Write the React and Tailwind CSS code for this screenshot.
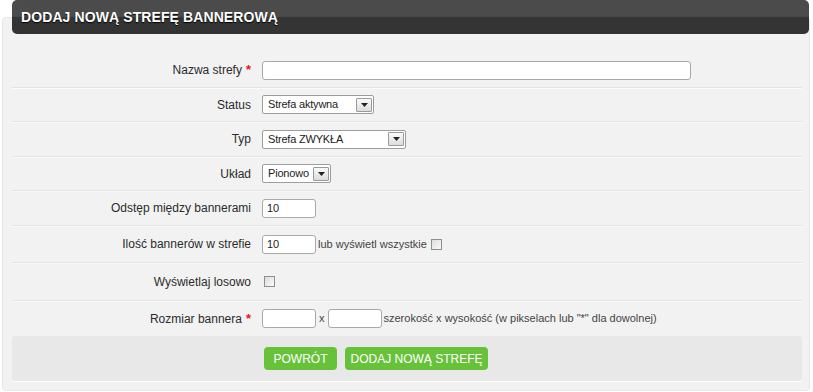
import React from "react";

const FONT = "font-['Liberation_Sans','Arial',sans-serif]";

function Label({ children, req }) {
  return (
    <div className="w-[240px] shrink-0 pr-[1px] text-right text-[12px] text-[#2b2b2b]">
      {children}
      {req && <span className="ml-[4px] text-[13px] font-bold text-[#e3161b]">*</span>}
    </div>
  );
}

function Row({ h, label, req, last, children }) {
  return (
    <div
      className={`flex items-center gap-[10px] ${h} ${
        last ? "" : "border-b border-[#e3e3e3] shadow-[0_1px_0_#fafafa]"
      }`}
    >
      <Label req={req}>{label}</Label>
      <div className="flex items-center">{children}</div>
    </div>
  );
}

function Select({ w, value }) {
  return (
    <div
      className={`flex h-[19px] items-center justify-between rounded-[2px] border border-[#9d9d9d] bg-white pl-[5px] pr-[1px] text-[11px] tracking-[-0.2px] text-[#222] ${w}`}
    >
      <span>{value}</span>
      <div className="flex h-[14px] w-[16px] shrink-0 items-center justify-center rounded-[1px] border border-[#9a9a9a] bg-[linear-gradient(#fafafa,#dcdcdc)]">
        <svg width="7" height="4" viewBox="0 0 7 4">
          <path d="M0 0h7L3.5 4z" fill="#222" />
        </svg>
      </div>
    </div>
  );
}

function Input({ w, value }) {
  return (
    <div
      className={`flex h-[19px] items-center rounded-[3px] border border-[#a9a9a9] bg-white pl-[4px] text-[11px] text-[#222] ${w}`}
    >
      {value}
    </div>
  );
}

function Check() {
  return (
    <div className="h-[11px] w-[11px] border border-[#8e8e8e] bg-[linear-gradient(135deg,#dcdcdc,#fbfbfb)]" />
  );
}

export default function App() {
  return (
    <div className={`h-[392px] w-[813px] overflow-hidden bg-white pl-[2px] pr-[3px] pt-[17px] ${FONT}`}>
      <div className="h-[374px] rounded-[4px] border border-[#e6e6e6] bg-[#f2f2f2] pl-[9px] pr-[7px]">
        <div className="-mt-[18px] -mr-[7px] flex h-[34px] items-center rounded-[5px] bg-[linear-gradient(to_bottom,#4b4b4b_0%,#4b4b4b_48%,#343434_52%,#343434_100%)] pl-[9px]">
          <h1 className="text-[14px] font-bold tracking-[0.1px] text-white [text-shadow:0_1px_1px_#000]">
            DODAJ NOWĄ STREFĘ BANNEROWĄ
          </h1>
        </div>

        <div className="mt-[19px]">
          <Row h="h-[35px]" label="Nazwa strefy" req>
            <Input w="w-[429px]" value="" />
          </Row>
          <Row h="h-[34px]" label="Status">
            <Select w="w-[112px]" value="Strefa aktywna" />
          </Row>
          <Row h="h-[35px]" label="Typ">
            <Select w="w-[144px]" value="Strefa ZWYKŁA" />
          </Row>
          <Row h="h-[34px]" label="Układ">
            <Select w="w-[69px]" value="Pionowo" />
          </Row>
          <Row h="h-[35px]" label="Odstęp między bannerami">
            <Input w="w-[54px]" value="10" />
          </Row>
          <Row h="h-[37px]" label="Ilość bannerów w strefie">
            <Input w="w-[54px]" value="10" />
            <span className="ml-[2px] mr-[4px] text-[11px] text-[#444]">lub wyświetl wszystkie</span>
            <Check />
          </Row>
          <Row h="h-[38px]" label="Wyświetlaj losowo">
            <div className="pl-[2px]">
              <Check />
            </div>
          </Row>
          <Row h="h-[35px]" label="Rozmiar bannera" req last>
            <Input w="w-[54px]" value="" />
            <span className="mx-[3px] text-[11px] text-[#444]">x</span>
            <Input w="w-[54px]" value="" />
            <span className="ml-[2px] text-[11px] text-[#444]">
              szerokość x wysokość (w pikselach lub "*" dla dowolnej)
            </span>
          </Row>
        </div>

        <div className="flex h-[45px] items-center gap-[8px] rounded-[3px] bg-[#e8e8e8] pl-[252px] shadow-[0_1px_0_#fff]">
          <button className="h-[23px] w-[73px] rounded-[4px] bg-[#67c23a] text-[12px] text-white">
            POWRÓT
          </button>
          <button className="h-[23px] w-[143px] rounded-[4px] bg-[#67c23a] text-[12px] text-white">
            DODAJ NOWĄ STREFĘ
          </button>
        </div>
      </div>
    </div>
  );
}
